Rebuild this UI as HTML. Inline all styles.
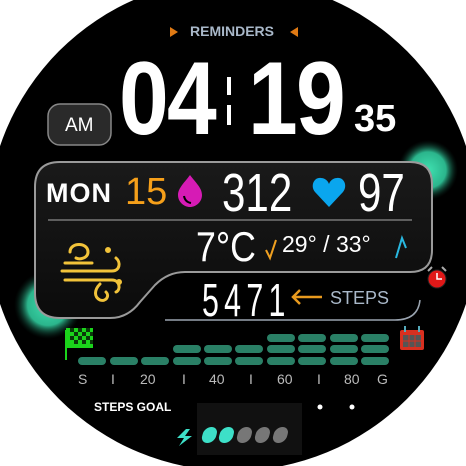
<!DOCTYPE html>
<html><head><meta charset="utf-8"><style>
body{margin:0;width:466px;height:466px;background:#fff;overflow:hidden;position:relative;font-family:"Liberation Sans",sans-serif}
.a{position:absolute;white-space:nowrap;line-height:1}
.c{font-family:"Liberation Sans Narrow","Liberation Sans",sans-serif}
</style></head><body>
<svg width="466" height="466" style="position:absolute;left:0;top:0">
<defs>
<radialGradient id="g1" cx="50%" cy="50%" r="50%"><stop offset="0" stop-color="#3fe0b0"/><stop offset="0.6" stop-color="#2bb58c"/><stop offset="1" stop-color="#0a2a20" stop-opacity="0"/></radialGradient>
<linearGradient id="pb" x1="0" y1="0" x2="0" y2="1"><stop offset="0" stop-color="#1a1a1a"/><stop offset="1" stop-color="#0b0b0b"/></linearGradient>
<clipPath id="cc"><circle cx="233" cy="225" r="246"/></clipPath>
</defs>
<circle cx="233" cy="225" r="246" fill="#000"/>
<g clip-path="url(#cc)">
<circle cx="428" cy="170" r="30" fill="url(#g1)"/>
<circle cx="48" cy="305" r="34" fill="url(#g1)"/>
<path d="M60 162 H410 Q432 162 432 184 V250 Q432 272 410 272 H185 Q168 272 155 285 L140 302 Q128 318 110 318 H60 Q35 318 35 293 V187 Q35 162 60 162 Z" fill="url(#pb)" stroke="#9a9a9a" stroke-width="2"/>
<path d="M165 320 H395 Q418 320 420 300" fill="none" stroke="#9aa4b0" stroke-width="1.5"/>
<line x1="48" y1="220" x2="412" y2="220" stroke="#777" stroke-width="1.5"/>
<rect x="197" y="403" width="105" height="52" fill="#111"/>
</g>
<polygon points="170,27 178,32 170,37" fill="#e07a14"/>
<polygon points="298,27 290,32 298,37" fill="#e07a14"/>
<rect x="227" y="77" width="4" height="18" fill="#fff"/><rect x="227" y="105" width="4" height="20" fill="#fff"/>
<rect x="48" y="104" width="63" height="41" rx="12" fill="#2a2a2a" stroke="#888" stroke-width="1.5"/>
<path d="M190 175 C185 182 178 188 178 195 C178 202 184 207 190 207 C196 207 202 202 202 195 C202 188 196 183 190 175 Z" fill="#d61bb5"/>
<path d="M184 196 Q185 202 191 203" stroke="#000" stroke-width="2" fill="none"/>
<path d="M329 207 L315 192 C310 186 314 177 321 178 C325 178 328 181 329 184 C330 181 333 178 337 178 C344 177 348 186 343 192 Z" fill="#0aa6ee"/>
<path d="M266 250 L270 258 L276 240" stroke="#f0a020" stroke-width="2" fill="none"/>
<path d="M396 258 L402 238 L406 248" stroke="#29b8e0" stroke-width="2" fill="none"/>
<g stroke="#f2c33a" stroke-width="3" fill="none" stroke-linecap="round">
<path d="M70 252 C70 242 88 242 88 252 C88 258 80 260 76 258"/>
<path d="M65 263 H92"/>
<path d="M62 271 H112 C120 271 121 262 116 258"/>
<path d="M65 280 H112 C120 280 121 290 116 292"/>
<path d="M100 284 C94 290 94 297 100 300 C106 302 110 296 106 292"/>
<circle cx="108" cy="250" r="1.5" fill="#f2c33a"/><circle cx="119" cy="282" r="1.5" fill="#f2c33a"/>
</g>
<path d="M293 297 H322 M300 290 L293 297 L300 304" stroke="#e89a1e" stroke-width="2.5" fill="none"/>
<circle cx="437" cy="279" r="9" fill="#e01818" stroke="#222" stroke-width="1"/>
<path d="M437 273 V279 H442" stroke="#fff" stroke-width="1.5" fill="none"/>
<path d="M428 271 L432 267 M446 271 L442 267" stroke="#aaa" stroke-width="2"/>
<line x1="66" y1="330" x2="66" y2="360" stroke="#1bd41b" stroke-width="2"/>
<rect x="66" y="328" width="27" height="20" fill="#1bd41b"/>
<g fill="#0a3a0a"><rect x="70" y="328" width="4" height="4"/><rect x="78" y="328" width="4" height="4"/><rect x="86" y="328" width="4" height="4"/><rect x="74" y="332" width="4" height="4"/><rect x="82" y="332" width="4" height="4"/><rect x="90" y="332" width="3" height="4"/><rect x="70" y="336" width="4" height="4"/><rect x="78" y="336" width="4" height="4"/><rect x="86" y="336" width="4" height="4"/><rect x="74" y="340" width="4" height="4"/><rect x="82" y="340" width="4" height="4"/><rect x="90" y="340" width="3" height="4"/></g>
<rect x="400" y="330" width="24" height="20" rx="2" fill="#d83020"/>
<rect x="403" y="335" width="18" height="12" fill="#555"/>
<g stroke="#d83020" stroke-width="1"><line x1="409" y1="335" x2="409" y2="347"/><line x1="415" y1="335" x2="415" y2="347"/><line x1="403" y1="341" x2="421" y2="341"/></g>
<rect x="404" y="326" width="2" height="6" fill="#5ab"/><rect x="418" y="326" width="2" height="6" fill="#5ab"/>
<g fill="#2a8066">
<rect x="78" y="357" width="28" height="8" rx="4"/><rect x="110" y="357" width="28" height="8" rx="4"/><rect x="141" y="357" width="28" height="8" rx="4"/><rect x="173" y="357" width="28" height="8" rx="4"/><rect x="204" y="357" width="28" height="8" rx="4"/><rect x="235" y="357" width="28" height="8" rx="4"/><rect x="267" y="357" width="28" height="8" rx="4"/><rect x="298" y="357" width="28" height="8" rx="4"/><rect x="330" y="357" width="28" height="8" rx="4"/><rect x="361" y="357" width="28" height="8" rx="4"/>
<rect x="173" y="345" width="28" height="8" rx="4"/><rect x="204" y="345" width="28" height="8" rx="4"/><rect x="235" y="345" width="28" height="8" rx="4"/><rect x="267" y="345" width="28" height="8" rx="4"/><rect x="298" y="345" width="28" height="8" rx="4"/><rect x="330" y="345" width="28" height="8" rx="4"/><rect x="361" y="345" width="28" height="8" rx="4"/>
<rect x="267" y="334" width="28" height="8" rx="4"/><rect x="298" y="334" width="28" height="8" rx="4"/><rect x="330" y="334" width="28" height="8" rx="4"/><rect x="361" y="334" width="28" height="8" rx="4"/>
</g>
<circle cx="320" cy="407" r="2.5" fill="#fff"/><circle cx="352" cy="407" r="2.5" fill="#fff"/>
<path d="M186 429 L177 438 H184 L179 446 L192 436 H185 L190 429 Z" fill="#3de0c8"/>
<g transform="translate(114,0) skewX(-15)">
<rect x="205" y="427" width="14" height="16" rx="7" fill="#3de0c8"/>
<rect x="222" y="427" width="14" height="16" rx="7" fill="#3de0c8"/>
<rect x="240" y="427" width="14" height="16" rx="7" fill="#777"/>
<rect x="258" y="427" width="14" height="16" rx="7" fill="#777"/>
<rect x="276" y="427" width="14" height="16" rx="7" fill="#777"/>
</g>
</svg>
<div class="a" style="left:190px;top:24px;font-size:14px;font-weight:bold;color:#a9b8c9">REMINDERS</div>
<div class="a c" style="left:119px;top:47px;font-size:104px;font-weight:bold;color:#fff;transform:scaleX(0.86);transform-origin:left;letter-spacing:-2px">04</div>
<div class="a c" style="left:248px;top:47px;font-size:104px;font-weight:bold;color:#fff;transform:scaleX(0.86);transform-origin:left;letter-spacing:-2px">19</div>
<div class="a" style="left:354px;top:100px;font-size:38px;font-weight:bold;color:#fff">35</div>
<div class="a" style="left:65px;top:116px;font-size:19px;color:#fff">AM</div>
<div class="a" style="left:46px;top:180px;font-size:27px;font-weight:bold;color:#fff;letter-spacing:1px">MON</div>
<div class="a" style="left:125px;top:173px;font-size:38px;color:#f6a01a">15</div>
<div class="a c" style="left:222px;top:166px;font-size:54px;color:#fff;transform:scaleX(0.78);transform-origin:left">312</div>
<div class="a c" style="left:358px;top:166px;font-size:54px;color:#fff;transform:scaleX(0.78);transform-origin:left">97</div>
<div class="a c" style="left:196px;top:226px;font-size:42px;color:#fff;transform:scaleX(0.85);transform-origin:left">7°C</div>
<div class="a" style="left:282px;top:233px;font-size:23px;color:#fff">29° / 33°</div>
<div class="a c" style="left:202px;top:277px;font-size:46px;color:#fff;transform:scaleX(0.66);transform-origin:left;letter-spacing:8px">5471</div>
<div class="a" style="left:330px;top:289px;font-size:18px;color:#a9b8c9">STEPS</div>
<div class="a" style="top:372px;font-size:14px;color:#bbb;left:0;width:466px;height:16px">
<span class="a" style="left:78px">S</span><span class="a" style="left:111px">I</span><span class="a" style="left:140px">20</span><span class="a" style="left:182px">I</span><span class="a" style="left:209px">40</span><span class="a" style="left:249px">I</span><span class="a" style="left:277px">60</span><span class="a" style="left:317px">I</span><span class="a" style="left:344px">80</span><span class="a" style="left:377px">G</span></div>
<div class="a" style="left:94px;top:401px;font-size:12px;font-weight:bold;color:#fff">STEPS GOAL</div>
</body></html>
